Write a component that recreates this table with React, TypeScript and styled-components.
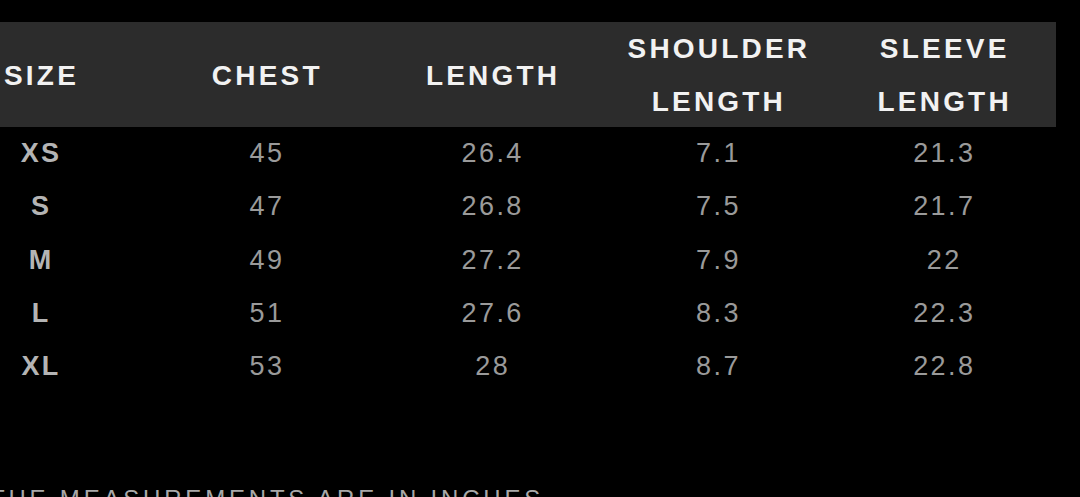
import styled, { createGlobalStyle } from "styled-components";

const GlobalStyle = createGlobalStyle`
  html, body {
    margin: 0;
    padding: 0;
    background: #000;
    overflow: hidden;
  }
  body {
    font-family: "Liberation Sans", Arial, sans-serif;
  }
`;

const headers = ["SIZE", "CHEST", "LENGTH", "SHOULDER\nLENGTH", "SLEEVE\nLENGTH"];

const rows = [
  ["XS", "45", "26.4", "7.1", "21.3"],
  ["S", "47", "26.8", "7.5", "21.7"],
  ["M", "49", "27.2", "7.9", "22"],
  ["L", "51", "27.6", "8.3", "22.3"],
  ["XL", "53", "28", "8.7", "22.8"],
];

export default function App() {
  return (
    <>
      <GlobalStyle />
      <Page>
        <Table>
          <HeaderRow>
            {headers.map((h) => (
              <HeaderCell key={h}>
                {h.split("\n").map((line) => (
                  <span key={line}>{line}</span>
                ))}
              </HeaderCell>
            ))}
          </HeaderRow>
          {rows.map((row) => (
            <Row key={row[0]}>
              {row.map((value, i) => (
                <Cell key={i} $size={i === 0}>
                  {value}
                </Cell>
              ))}
            </Row>
          ))}
        </Table>
        <Note>THE MEASUREMENTS ARE IN INCHES</Note>
      </Page>
    </>
  );
}

const Page = styled.div`
  width: 1080px;
  height: 497px;
  padding-top: 22px;
  box-sizing: border-box;
  background: #000;
  overflow: hidden;
`;

const Table = styled.div`
  width: 1129px;
  margin-left: -73px;
`;

const HeaderRow = styled.div`
  display: grid;
  grid-template-columns: repeat(5, 1fr);
  height: 105px;
  background: #2c2c2c;
`;

const HeaderCell = styled.div`
  display: flex;
  flex-direction: column;
  align-items: center;
  justify-content: center;
  color: #f2f2f2;
  font-weight: 700;
  font-size: 28px;
  letter-spacing: 3.2px;
  line-height: 53px;
  white-space: nowrap;

  span {
    display: block;
    margin-right: -3.2px;
  }
`;

const Row = styled.div`
  display: grid;
  grid-template-columns: repeat(5, 1fr);
  height: 53.3px;
  align-items: center;
`;

const Cell = styled.div<{ $size?: boolean }>`
  text-align: center;
  font-size: 27px;
  letter-spacing: 2.4px;
  text-indent: 2.4px;
  font-weight: ${(p) => (p.$size ? 700 : 400)};
  color: ${(p) => (p.$size ? "#b4b4b4" : "#9a9a9a")};
`;

const Note = styled.div`
  margin-top: 92px;
  margin-left: -10px;
  font-size: 24px;
  line-height: 28px;
  letter-spacing: 3.8px;
  color: #a8a8a8;
  white-space: nowrap;
`;
